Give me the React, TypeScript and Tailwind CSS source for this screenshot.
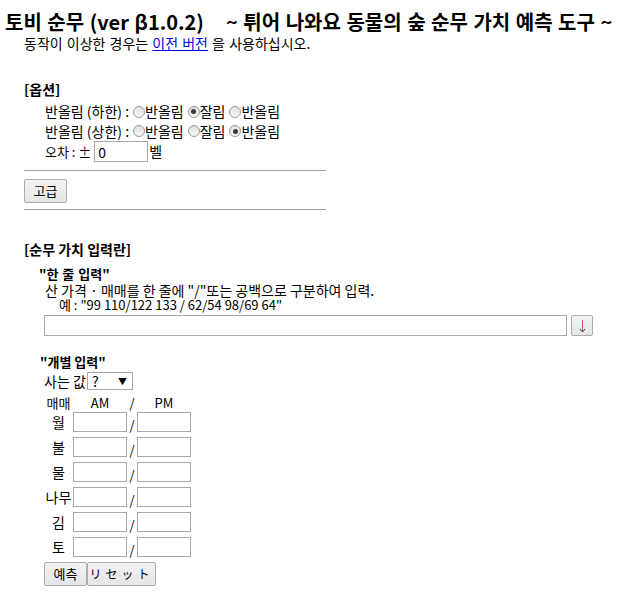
import React from 'react'

const font = "font-['Noto_Sans_CJK_KR','Noto_Sans',sans-serif]"

function Radio({ checked }: { checked?: boolean }) {
  return (
    <span className="ml-[4px] inline-flex h-[12px] w-[12px] shrink-0 items-center justify-center rounded-full border border-[#9a9a9a] bg-gradient-to-b from-[#e0e0e0] to-[#f8f8f8]">
      {checked && <span className="h-[5px] w-[5px] rounded-full bg-[#3a3a3a]" />}
    </span>
  )
}

// height and font size are passed in, so nothing here fights the caller's classes
function Btn({ children, className = '' }: { children: React.ReactNode; className?: string }) {
  return (
    <button
      className={`flex items-center justify-center whitespace-nowrap rounded-[2px] border border-[#acacac] bg-gradient-to-b from-[#f3f3f3] to-[#e5e5e5] ${className}`}
    >
      {children}
    </button>
  )
}

function Box({ className = '' }: { className?: string }) {
  return <div className={`border border-[#a9a9a9] bg-white ${className}`} />
}

const days = ['월', '불', '물', '나무', '김', '토']

export default function App() {
  return (
    <div className={`h-[615px] w-[631px] overflow-hidden bg-white text-[14px] text-black ${font}`}>
      {/* Header */}
      <h1 className="h-[34px] whitespace-nowrap pl-[5px] pt-[9px] text-[20px] font-bold leading-[25px] [word-spacing:1px]">
        토비 순무 (ver β1.0.2)&nbsp;&nbsp;&nbsp; ~ 튀어 나와요 동물의 숲 순무 가치 예측 도구 ~
      </h1>
      <p className="h-[18px] pl-[24px] leading-[18px] [word-spacing:1px]">
        동작이 이상한 경우는 <a className="text-[#0000ee] underline">이전 버전</a> 을 사용하십시오.
      </p>

      {/* Options */}
      <div className="ml-[24px] mt-[28px] w-[302px]">
        <div className="h-[19px] font-bold leading-[19px]">[옵션]</div>
        <div className="mt-[3px] pl-[21px]">
          <div className="flex h-[19px] items-center whitespace-nowrap">
            <span>반올림 (하한) :</span>
            <Radio />
            <span>반올림</span>
            <Radio checked />
            <span>잘림</span>
            <Radio />
            <span>반올림</span>
          </div>
          <div className="flex h-[20px] items-center whitespace-nowrap">
            <span>반올림 (상한) :</span>
            <Radio />
            <span>반올림</span>
            <Radio />
            <span>잘림</span>
            <Radio checked />
            <span>반올림</span>
          </div>
          <div className="flex h-[21px] items-center whitespace-nowrap">
            <span className="text-[13px]">오차 : ±</span>
            <div className="ml-[3px] flex h-[21px] w-[54px] items-center border border-[#a9a9a9] bg-white pl-[3px] leading-none">
              0
            </div>
            <span className="ml-[1px]">벨</span>
          </div>
        </div>
        <div className="mt-[8px] border-t border-[#a0a0a0]" />
        <Btn className="mt-[8px] h-[24px] w-[43px] text-[13px]">고급</Btn>
        <div className="mt-[6px] border-t border-[#a0a0a0]" />
      </div>

      {/* Turnip price input */}
      <div className="ml-[24px] mt-[30px]">
        <div className="h-[19px] font-bold leading-[19px]">[순무 가치 입력란]</div>
        <div className="ml-[15px] mt-[7px] h-[16px] text-[13px] font-bold leading-[16px] [word-spacing:1px]">"한 줄 입력"</div>
        <div className="ml-[21px] h-[16px] leading-[16px]">
          산 가격 · 매매를 한 줄에 "/"또는 공백으로 구분하여 입력.
        </div>
        <div className="ml-[35px] h-[14px] text-[13px] leading-[14px]">예 : "99 110/122 133 / 62/54 98/69 64"</div>
        <div className="ml-[20px] mt-[3px] flex h-[21px] gap-[4px]">
          <Box className="h-[21px] w-[523px]" />
          <Btn className="h-[21px] w-[22px]">
            <svg width="7" height="14" viewBox="0 0 7 14">
              <line x1="3.5" y1="1" x2="3.5" y2="12" stroke="#d8506a" strokeWidth="1" />
              <path d="M1 10 L3.5 13 L6 10" fill="none" stroke="#303040" strokeWidth="1" />
            </svg>
          </Btn>
        </div>

        <div className="ml-[16px] mt-[17px] h-[18px] text-[13px] font-bold leading-[18px]">"개별 입력"</div>
        <div className="ml-[20px] mt-[1px] flex h-[18px] items-center">
          <span className="w-[43px] whitespace-nowrap">사는 값</span>
          <div className="flex h-[18px] w-[46px] items-center justify-between border border-[#a9a9a9] bg-white pl-[4px] pr-[5px]">
            <span className="leading-none">?</span>
            <span className="text-[9px] leading-none">▼</span>
          </div>
        </div>

        {/* AM / PM table */}
        <div className="ml-[20px] mt-[3px]">
          <div className="flex h-[19px] items-center text-[13px] leading-[19px]">
            <span className="w-[29px] text-center">매매</span>
            <span className="w-[54px] text-center">AM</span>
            <span className="w-[10px] text-center">/</span>
            <span className="w-[54px] text-center">PM</span>
          </div>
          {days.map((d, i) => (
            <div key={d} className={`flex h-[20px] items-center ${i > 0 ? 'mt-[5px]' : ''}`}>
              <span className="w-[29px] whitespace-nowrap text-center">{d}</span>
              <Box className="h-[20px] w-[54px]" />
              <span className="w-[10px] pt-[6px] text-center text-[13px]">/</span>
              <Box className="h-[20px] w-[54px]" />
            </div>
          ))}
        </div>
        <div className="ml-[20px] mt-[5px] flex">
          <Btn className="h-[24px] w-[43px] text-[13px]">예측</Btn>
          <Btn className="h-[24px] w-[69px] text-[12px] tracking-[4px]">リセット</Btn>
        </div>
      </div>
    </div>
  )
}
